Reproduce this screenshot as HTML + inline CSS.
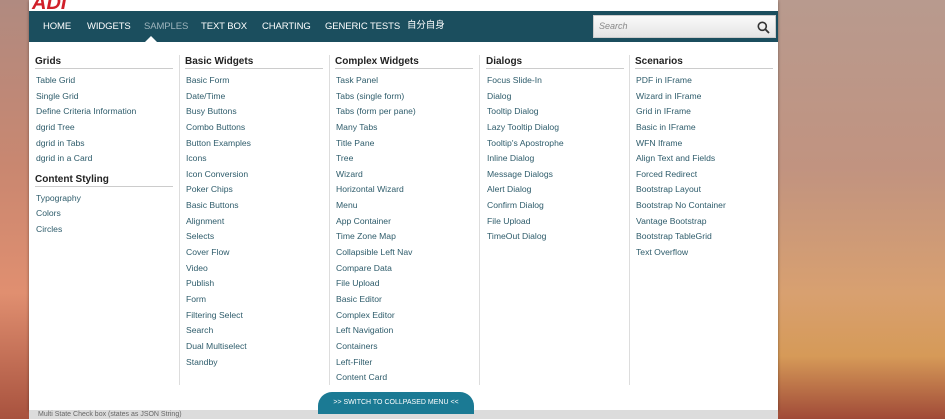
<!DOCTYPE html>
<html><head><meta charset="utf-8"><style>
*{margin:0;padding:0;box-sizing:border-box}
body{width:945px;height:419px;overflow:hidden;position:relative;font-family:"Liberation Sans","Noto Sans CJK SC",sans-serif;
background:linear-gradient(90deg,#b98576 0%,#c98f78 3%,#b8a09a 82%,#c99a86 100%);}
.lbg{position:absolute;left:0;top:0;width:29px;height:419px;background:linear-gradient(180deg,#b08a80 0%,#c98770 40%,#e08f70 70%,#a8523e 100%)}
.rbg{position:absolute;left:778px;top:0;width:167px;height:419px;background:linear-gradient(180deg,#b89a8e 0%,#c19380 40%,#d8a070 70%,#d69a58 85%,#a04a38 100%)}
.panel{position:absolute;left:29px;top:0;width:749px;height:410px;background:#fff;box-shadow:0 1px 3px rgba(0,0,0,.4)}
.bottom{position:absolute;left:29px;top:410px;width:749px;height:9px;background:#dcdcdc;font-size:7px;color:#666;padding-left:9px;line-height:9px}
.logo{position:absolute;left:32px;top:-8px;color:#d0202a;font-weight:bold;font-style:italic;font-size:20px}
.nav{position:absolute;left:29px;top:11px;width:749px;height:31px;background:#1b4e5e}
.nav span{position:absolute;top:10px;color:#fff;font-size:9.5px;line-height:11px;letter-spacing:-.1px}
.caret{position:absolute;left:145px;top:36px;width:0;height:0;border-left:6px solid transparent;border-right:6px solid transparent;border-bottom:6px solid #fff}
.search{position:absolute;left:593px;top:15px;width:183px;height:23px;background:linear-gradient(#fafafa,#e4e4e4);border:1px solid #ccc}
.search i{position:absolute;left:5px;top:5px;font-size:9px;color:#888;font-style:italic}
.col{position:absolute;top:56px;width:138px}
.col h3{font-size:10px;line-height:12px;font-weight:bold;color:#222;padding:0 0 0 0;border-bottom:1px solid #ccc;margin-bottom:5px}
.col a{display:block;font-size:8.6px;color:#2e5c6b;height:15.65px;line-height:12px;padding-left:1px;text-decoration:none}
.sep{position:absolute;top:55px;width:1px;height:330px;background:#ddd}
.btn{position:absolute;left:318px;top:392px;width:156px;height:22px;background:#1b7a94;border-radius:14px 14px 0 0;color:#fff;font-size:7px;text-align:center;line-height:22px}
</style></head><body>
<div class="lbg"></div><div class="rbg"></div>
<div class="panel"></div>
<div class="logo">ADI</div>
<div class="nav">
<span style="left:14px">HOME</span><span style="left:58px">WIDGETS</span><span style="left:115px;color:#9fb5bd">SAMPLES</span><span style="left:172px">TEXT BOX</span><span style="left:233px">CHARTING</span><span style="left:296px">GENERIC TESTS</span><span style="left:378px;top:9px">自分自身</span>
</div>
<div class="caret"></div>
<div class="search"><i>Search</i>
<svg style="position:absolute;right:5px;top:5px" width="13" height="13" viewBox="0 0 13 13"><circle cx="5.3" cy="5.3" r="4" fill="none" stroke="#333" stroke-width="1.6"/><line x1="8.3" y1="8.3" x2="12" y2="12" stroke="#333" stroke-width="1.8"/></svg></div>
<div class="sep" style="left:179px"></div><div class="sep" style="left:329px"></div><div class="sep" style="left:479px"></div><div class="sep" style="left:629px"></div>
<div class="col" style="left:35px">
<h3>Grids</h3><a>Table Grid</a><a>Single Grid</a><a>Define Criteria Information</a><a>dgrid Tree</a><a>dgrid in Tabs</a><a>dgrid in a Card</a>
<h3 style="margin-top:6px">Content Styling</h3><a>Typography</a><a>Colors</a><a>Circles</a></div>
<div class="col" style="left:185px"><h3>Basic Widgets</h3><a>Basic Form</a><a>Date/Time</a><a>Busy Buttons</a><a>Combo Buttons</a><a>Button Examples</a><a>Icons</a><a>Icon Conversion</a><a>Poker Chips</a><a>Basic Buttons</a><a>Alignment</a><a>Selects</a><a>Cover Flow</a><a>Video</a><a>Publish</a><a>Form</a><a>Filtering Select</a><a>Search</a><a>Dual Multiselect</a><a>Standby</a></div>
<div class="col" style="left:335px"><h3>Complex Widgets</h3><a>Task Panel</a><a>Tabs (single form)</a><a>Tabs (form per pane)</a><a>Many Tabs</a><a>Title Pane</a><a>Tree</a><a>Wizard</a><a>Horizontal Wizard</a><a>Menu</a><a>App Container</a><a>Time Zone Map</a><a>Collapsible Left Nav</a><a>Compare Data</a><a>File Upload</a><a>Basic Editor</a><a>Complex Editor</a><a>Left Navigation</a><a>Containers</a><a>Left-Filter</a><a>Content Card</a></div>
<div class="col" style="left:486px"><h3>Dialogs</h3><a>Focus Slide-In</a><a>Dialog</a><a>Tooltip Dialog</a><a>Lazy Tooltip Dialog</a><a>Tooltip's Apostrophe</a><a>Inline Dialog</a><a>Message Dialogs</a><a>Alert Dialog</a><a>Confirm Dialog</a><a>File Upload</a><a>TimeOut Dialog</a></div>
<div class="col" style="left:635px"><h3>Scenarios</h3><a>PDF in IFrame</a><a>Wizard in IFrame</a><a>Grid in IFrame</a><a>Basic in IFrame</a><a>WFN Iframe</a><a>Align Text and Fields</a><a>Forced Redirect</a><a>Bootstrap Layout</a><a>Bootstrap No Container</a><a>Vantage Bootstrap</a><a>Bootstrap TableGrid</a><a>Text Overflow</a></div>
<div class="bottom">Multi State Check box (states as JSON String)</div>
<div class="btn">&gt;&gt; SWITCH TO COLLPASED MENU &lt;&lt;</div>
</body></html>
